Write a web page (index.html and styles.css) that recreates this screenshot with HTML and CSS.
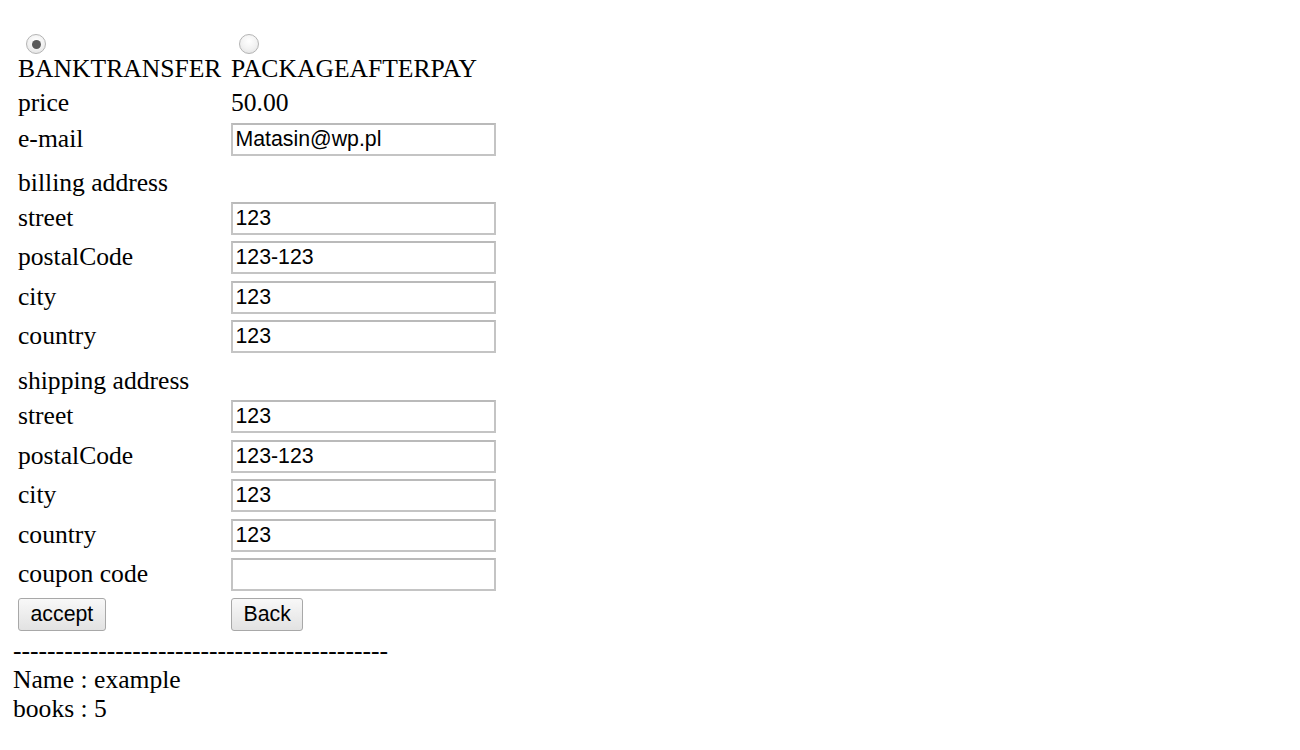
FILE: index.html
```html
<!DOCTYPE html>
<html>
<head>
<meta charset="utf-8">
<link rel="stylesheet" href="styles.css">
</head>
<body>
<form class="order">
<table class="form-table">
<tr class="row-choice">
<td class="label"><span class="radio checked"></span><span class="choice-text">BANKTRANSFER</span></td>
<td class="value"><span class="radio"></span><span class="choice-text">PACKAGEAFTERPAY</span></td>
</tr>
<tr class="row-text"><td class="label">price</td><td class="value">50.00</td></tr>
<tr class="row-input"><td class="label">e-mail</td><td class="value"><input class="field" type="text" value="Matasin@wp.pl"></td></tr>
<tr class="row-section billing"><td class="label" colspan="2">billing address</td></tr>
<tr class="row-input"><td class="label">street</td><td class="value"><input class="field" type="text" value="123"></td></tr>
<tr class="row-input"><td class="label">postalCode</td><td class="value"><input class="field" type="text" value="123-123"></td></tr>
<tr class="row-input"><td class="label">city</td><td class="value"><input class="field" type="text" value="123"></td></tr>
<tr class="row-input"><td class="label">country</td><td class="value"><input class="field" type="text" value="123"></td></tr>
<tr class="row-section shipping"><td class="label" colspan="2">shipping address</td></tr>
<tr class="row-input"><td class="label">street</td><td class="value"><input class="field" type="text" value="123"></td></tr>
<tr class="row-input"><td class="label">postalCode</td><td class="value"><input class="field" type="text" value="123-123"></td></tr>
<tr class="row-input"><td class="label">city</td><td class="value"><input class="field" type="text" value="123"></td></tr>
<tr class="row-input"><td class="label">country</td><td class="value"><input class="field" type="text" value="123"></td></tr>
<tr class="row-input"><td class="label">coupon code</td><td class="value"><input class="field" type="text" value=""></td></tr>
<tr class="row-input row-buttons"><td class="label"><button class="btn" type="button">accept</button></td><td class="value"><button class="btn" type="button">Back</button></td></tr>
</table>
</form>
<div class="summary">--------------------------------------------<br>Name : example<br>books : 5</div>
</body>
</html>
```
FILE: styles.css
```css
html, body {
  background: #fff;
}
body {
  margin: 13px;
  font-family: "Liberation Serif", "Times New Roman", serif;
  font-size: 25.6px;
  line-height: 29.4px;
  color: #000;
}
.order {
  margin: 0;
}
.form-table {
  border-collapse: separate;
  border-spacing: 0;
}
.form-table td {
  padding: 0;
  vertical-align: top;
  white-space: nowrap;
}
.form-table td.label {
  width: 213px;
  padding-left: 5px;
}

/* payment choice row */
.row-choice td {
  padding-top: 21px;
  padding-bottom: 2.2px;
}
.choice-text {
  display: block;
}
.radio {
  display: block;
  box-sizing: border-box;
  width: 20px;
  height: 20px;
  margin-left: 8px;
  border-radius: 50%;
  border: 1px solid #b4b4b4;
  background: radial-gradient(circle at 50% 35%, #ffffff 0%, #f1f1f1 55%, #dcdcdc 100%);
  position: relative;
}
.radio.checked::after {
  content: "";
  position: absolute;
  left: 50%;
  top: 50%;
  width: 9px;
  height: 9px;
  margin: -4.5px 0 0 -4.5px;
  border-radius: 50%;
  background: #5a5a5a;
}

/* plain text row */
.row-text td {
  padding-top: 2.4px;
  padding-bottom: 2.2px;
}

/* input rows */
.row-input td {
  padding-top: 3.25px;
  padding-bottom: 3.25px;
}
.row-input td.label {
  line-height: 32px;
}

/* section headings */
.row-section.billing td {
  padding-top: 8.9px;
  padding-bottom: 1.2px;
}
.row-section.shipping td {
  padding-top: 9.4px;
  padding-bottom: 1.7px;
}

.field {
  display: block;
  box-sizing: border-box;
  width: 265px;
  height: 33px;
  margin: 0;
  padding: 1px 2.5px;
  border: 2px solid #c4c4c4;
  border-top-color: #bababa;
  font-family: "Liberation Sans", Arial, sans-serif;
  font-size: 21.3px;
  color: #000;
  background: #fff;
}
.btn {
  display: block;
  box-sizing: border-box;
  height: 33px;
  margin: 0;
  padding: 0 11.5px;
  border: 1px solid #a8a8a8;
  border-radius: 3px;
  background: linear-gradient(#f8f8f8, #e2e2e2);
  font-family: "Liberation Sans", Arial, sans-serif;
  font-size: 21.3px;
  line-height: 31px;
  color: #000;
}
.summary {
  margin-top: 1.5px;
  line-height: 29px;
}
```
